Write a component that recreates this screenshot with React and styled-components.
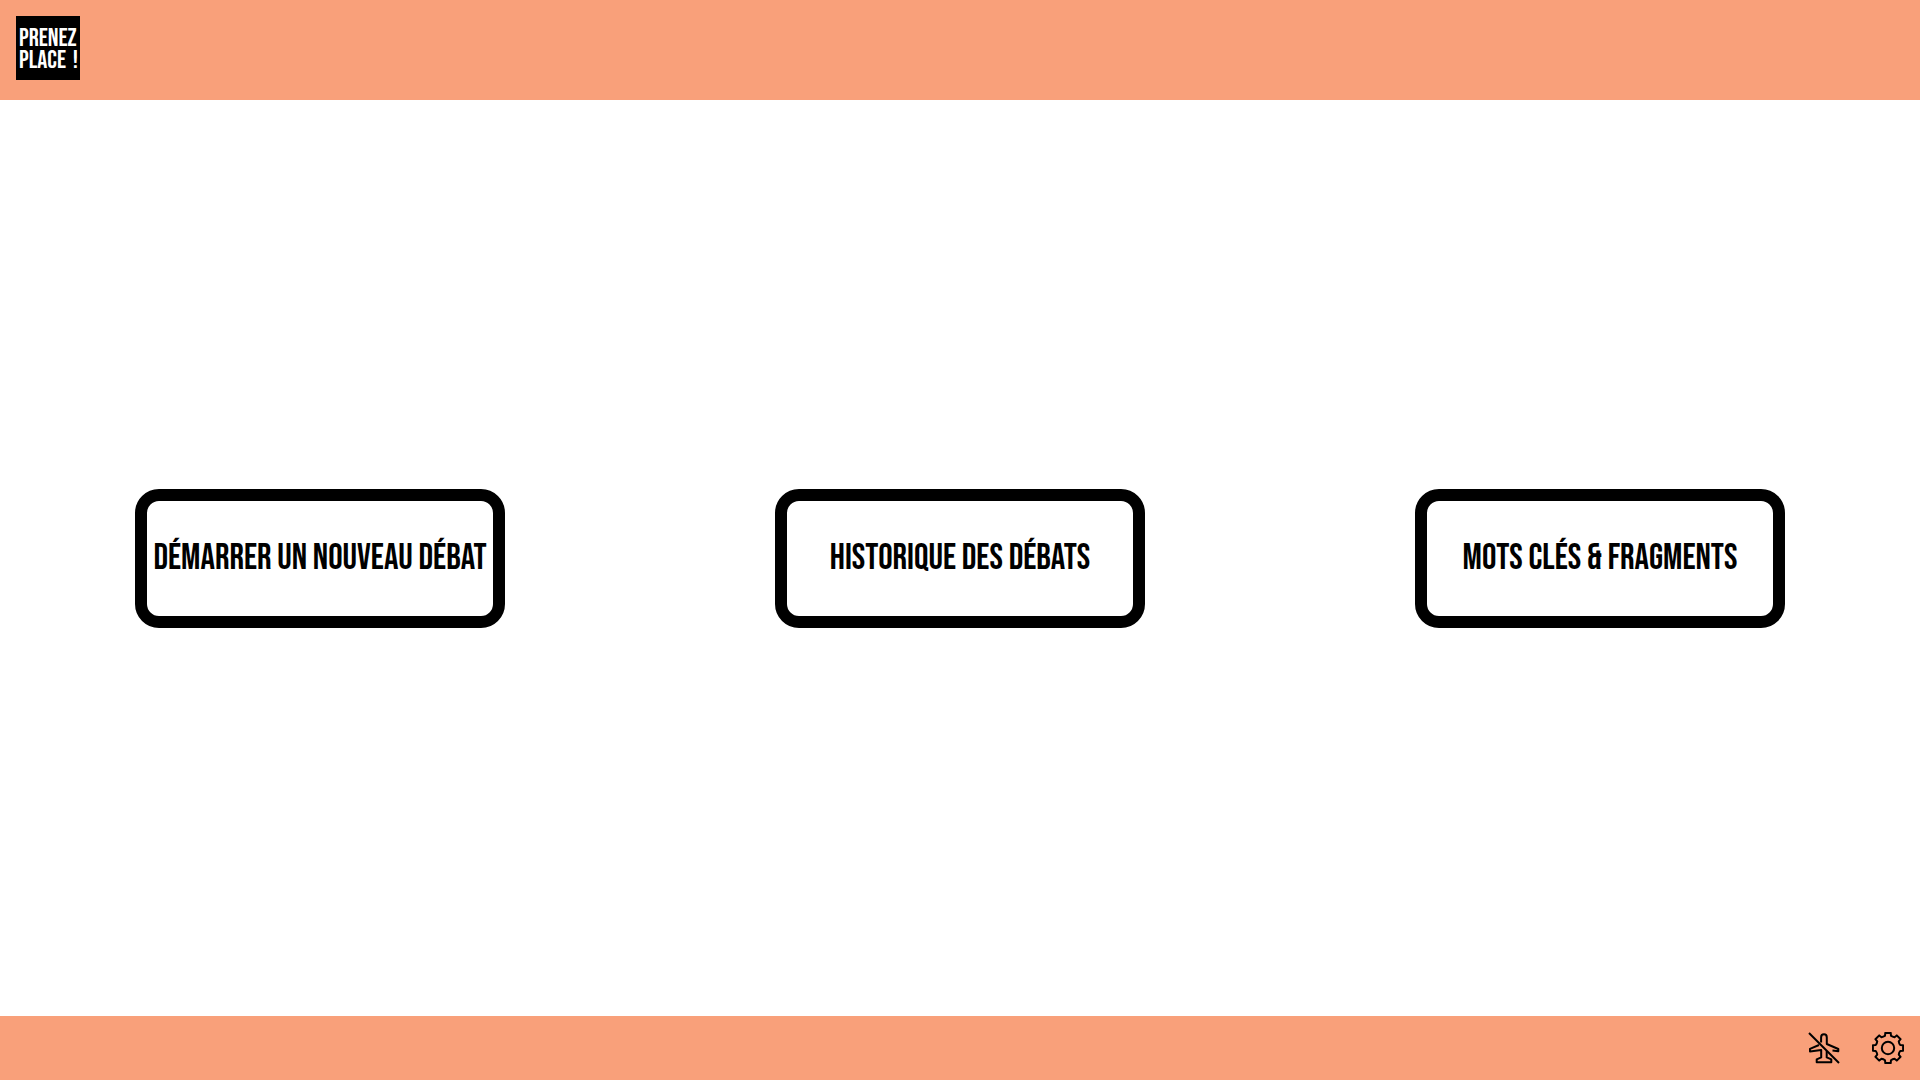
import React from 'react';
import styled, { createGlobalStyle } from 'styled-components';

const GlobalStyle = createGlobalStyle`
  *, *::before, *::after { box-sizing: border-box; }
  body {
    margin: 0;
    background: #fff;
    color: #000;
    font-family: 'Bebas Neue', 'Liberation Sans Narrow', 'Liberation Sans', sans-serif;
    font-weight: 400;
  }
`;

const Page = styled.div`
  display: flex;
  flex-direction: column;
  min-height: 100vh;
`;

const Header = styled.header`
  display: flex;
  padding: 16px 16px 20px;
  background: #f9a07a;
`;

const Logo = styled.a`
  display: flex;
  flex-direction: column;
  justify-content: center;
  width: 64px;
  height: 64px;
  padding: 4px 2px 0 3px;
  background: #000;
  color: #fff;
  font-size: 25px;
  line-height: 22px;
  text-decoration: none;
  white-space: nowrap;
`;

const LogoLine = styled.span`
  display: flex;
  justify-content: space-between;
`;

const Main = styled.main`
  flex: 1;
  display: grid;
  grid-template-columns: repeat(3, 1fr);
  align-items: center;
  justify-items: center;
`;

const MenuButton = styled.button`
  width: 370px;
  min-height: 139px;
  padding: 2px 0 0;
  border: 12px solid #000;
  border-radius: 24px;
  background: #fff;
  color: inherit;
  font: inherit;
  font-size: 36px;
  line-height: 40px;
  text-transform: uppercase;
  white-space: nowrap;
  cursor: pointer;
`;

const Footer = styled.footer`
  display: flex;
  justify-content: flex-end;
  gap: 32px;
  padding: 16px;
  background: #f9a07a;
`;

const IconButton = styled.button`
  display: flex;
  padding: 0;
  border: 0;
  background: none;
  color: inherit;
  cursor: pointer;
`;

const Icon = styled.svg.attrs({ viewBox: '0 0 32 32', width: 32, height: 32, 'aria-hidden': true })`
  fill: none;
  stroke: currentColor;
  stroke-width: 2px;
  stroke-linejoin: round;
`;

const TOOTH = [[-3, -12.2], [-2.7, -15.1], [2.7, -15.1], [3, -12.2], [4.5, -11]];

function gearPath() {
  let d = '';
  for (let k = 0; k < 8; k += 1) {
    const a = (k * Math.PI) / 4;
    const [p0, p1, p2, p3, valley] = TOOTH.map(([x, y]) =>
      `${(16 + x * Math.cos(a) - y * Math.sin(a)).toFixed(2)} ${(16 + x * Math.sin(a) + y * Math.cos(a)).toFixed(2)}`);
    d += `${k === 0 ? 'M' : ''}${p0}L${p1}L${p2}L${p3}Q${valley} `;
  }
  return `${d}13 3.8Z`;
}

const AirplaneOff = () => (
  <Icon>
    <path d="M1 1L31 31" />
    <path d="M13.1 10.5V5.4C13.1 3.6 14.3 2.2 16 2.2S18.8 3.6 18.8 5.4V12L30.3 17V19.2L24.5 18.6" />
    <path d="M11 13L2 16.8V19.4L13.2 18V25.4L8.7 27.4V30.2H23.3V27.4L18.7 25.4V19" />
  </Icon>
);

const Gear = () => (
  <Icon>
    <path d={gearPath()} />
    <circle cx="16" cy="16" r="6.2" />
  </Icon>
);

const ENTRIES = ['Démarrer un nouveau débat', 'Historique des débats', 'Mots clés & fragments'];

export default function App() {
  return (
    <Page>
      <GlobalStyle />
      <Header>
        <Logo href="#" aria-label="Prenez place !">
          <LogoLine>PRENEZ</LogoLine>
          <LogoLine>
            <span>PLACE</span>
            <span>!</span>
          </LogoLine>
        </Logo>
      </Header>
      <Main>
        {ENTRIES.map((label) => (
          <MenuButton key={label} type="button">{label}</MenuButton>
        ))}
      </Main>
      <Footer>
        <IconButton type="button" aria-label="Mode hors ligne"><AirplaneOff /></IconButton>
        <IconButton type="button" aria-label="Paramètres"><Gear /></IconButton>
      </Footer>
    </Page>
  );
}
